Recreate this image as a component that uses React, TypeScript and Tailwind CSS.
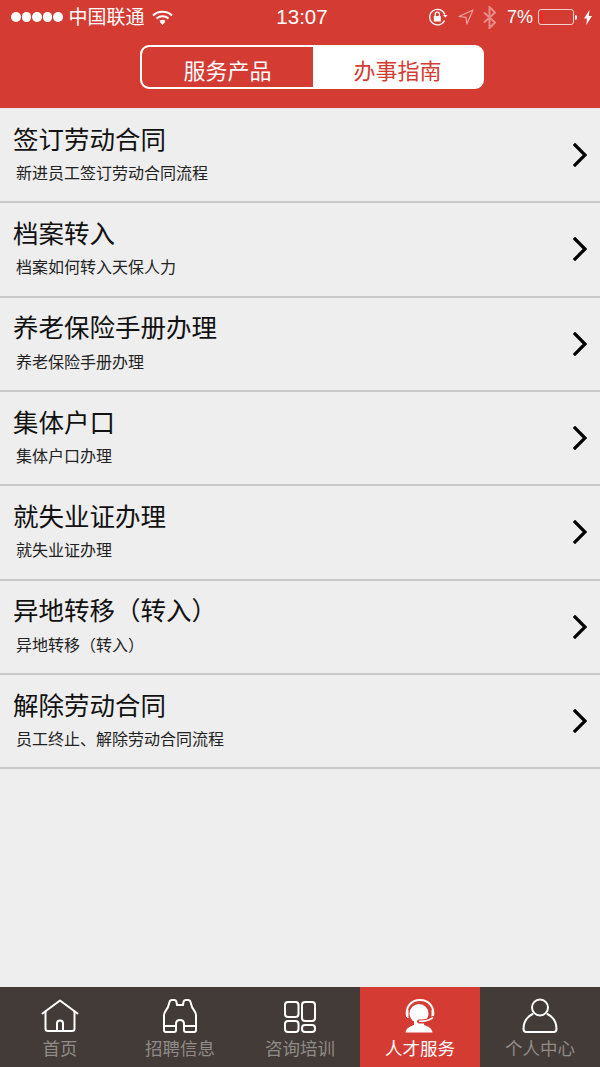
const FONT = "font-['Liberation_Sans','Noto_Sans_CJK_SC',sans-serif]";

const guides = [
  { title: "签订劳动合同", desc: "新进员工签订劳动合同流程" },
  { title: "档案转入", desc: "档案如何转入天保人力" },
  { title: "养老保险手册办理", desc: "养老保险手册办理" },
  { title: "集体户口", desc: "集体户口办理" },
  { title: "就失业证办理", desc: "就失业证办理" },
  { title: "异地转移（转入）", desc: "异地转移（转入）" },
  { title: "解除劳动合同", desc: "员工终止、解除劳动合同流程" },
];

function HomeIcon() {
  return (
    <svg width="38" height="34" viewBox="0 0 38 34" fill="none" stroke="#fff" strokeWidth="2" strokeLinejoin="round" strokeLinecap="round">
      <path d="M1.500 14.500 19 1.500 36.500 14.500" />
      <path d="M4.500 12.500v17a2.500 2.500 0 0 0 2.500 2.500h24a2.500 2.500 0 0 0 2.500-2.500v-17" />
      <path d="M16 32v-7.500a3 3 0 0 1 6 0V32" />
    </svg>
  );
}

function BinocularsIcon() {
  return (
    <svg width="34" height="34" viewBox="0 0 34 34" fill="none" stroke="#fff" strokeWidth="2" strokeLinejoin="round" strokeLinecap="round">
      <path d="M1 31V16c0-3 3-6 4-8l1.500-5Q7 1 9 1h2q2 0 2.500 2l.5 3h6l.5-3q.5-2 2.500-2h2q2 0 2.500 2L29 8c1 2 4 5 4 8v15q0 2-2 2h-8q-2 0-2-2v-6q0-4-4-4t-4 4v6q0 2-2 2H3q-2 0-2-2z" />
      <path d="M1 27h12M21 27h12" />
    </svg>
  );
}

function GridIcon() {
  return (
    <svg width="32" height="32" viewBox="0 0 32 32" fill="none" stroke="#fff" strokeWidth="2">
      <rect x="1" y="1" width="13.500" height="15" rx="3" />
      <rect x="18" y="1" width="13" height="19" rx="3" />
      <rect x="1" y="20" width="13.500" height="11" rx="3" />
      <rect x="18" y="24" width="13" height="7" rx="3" />
    </svg>
  );
}

function AgentIcon() {
  return (
    <svg width="32" height="34" viewBox="0 0 32 34" fill="none">
      <path d="M3 17C1.500 8 7 1 16 1s14.500 7 13 16" stroke="#fff" strokeWidth="2" strokeLinecap="round" />
      <path d="M2 11h2.500v8H3zM27.500 11H30l-1 8h-1.500z" fill="#fff" />
      <circle cx="15" cy="14.500" r="9.500" fill="#fff" />
      <path d="M10 21h10v6H10z" fill="#fff" />
      <path d="M1.500 33.500C2 29 6 27.500 10 26h10c4 1.500 8 3 8.500 7.500z" fill="#fff" />
      <path d="M15 22.500c5 .3 10-.8 14-3.500" stroke="#d43c33" strokeWidth="4" strokeLinecap="round" />
      <path d="M15.500 22.300c5 .2 9-.8 13-3.300" stroke="#fff" strokeWidth="1.600" strokeLinecap="round" />
    </svg>
  );
}

function PersonIcon() {
  return (
    <svg width="36" height="35" viewBox="0 0 36 35" fill="none" stroke="#fff" strokeWidth="2" strokeLinecap="round">
      <circle cx="18" cy="9.500" r="8" />
      <path d="M10.500 16C5 19 1.500 24 1.500 31c0 2 1 3 3 3h27c2 0 3-1 3-3 0-7-3.500-12-9-15" />
    </svg>
  );
}

const tabs = [
  { label: "首页", icon: <HomeIcon /> },
  { label: "招聘信息", icon: <BinocularsIcon /> },
  { label: "咨询培训", icon: <GridIcon /> },
  { label: "人才服务", icon: <AgentIcon />, active: true },
  { label: "个人中心", icon: <PersonIcon /> },
];

function StatusBar() {
  return (
    <div className="grid h-[34px] grid-cols-3 items-center text-white">
      <div className="flex items-center pl-[11px]">
        <div className="flex gap-[1px]">
          {[0, 1, 2, 3, 4].map((i) => (
            <span key={i} className="h-[9.500px] w-[9.500px] rounded-full bg-white" />
          ))}
        </div>
        <span className="ml-[6px] text-[19px] leading-none">中国联通</span>
        <svg className="ml-[7px]" width="21" height="15" viewBox="0 0 21 15" fill="none" stroke="#fff" strokeWidth="2">
          <path d="M1 5.500c5-5 14-5 19 0" />
          <path d="M4.500 8.500c3.500-3 8.500-3 12 0" />
          <path d="M8 11.500c1.500-1 3.500-1 5 0" />
          <path d="M10.500 15l-2.500-3c1.500-1 3.500-1 5 0z" fill="#fff" stroke="none" />
        </svg>
      </div>
      <div className="pl-[4px] text-center text-[20.500px] leading-none">13:07</div>
      <div className="flex items-center justify-end pr-[8px]">
        <svg width="19" height="18" viewBox="0 0 19 18" fill="none" stroke="#fff" strokeWidth="1.300">
          <path d="M15.500 12.500a7.800 7.800 0 1 1 .3-6" />
          <path d="M14 7h4.500l-2.200 2.500z" fill="#fff" stroke="none" />
          <rect x="4.800" y="8" width="7" height="5.500" fill="#fff" stroke="none" />
          <path d="M6.200 8V6.300a2.100 2.100 0 0 1 4.200 0V8" />
        </svg>
        <svg className="ml-[10px]" width="16" height="16" viewBox="0 0 16 16" fill="none" stroke="#eda5a1" strokeWidth="1.200" strokeLinejoin="round">
          <path d="M15 1 1 7.500l7 .8.800 6.700z" />
        </svg>
        <svg className="ml-[9px]" width="13" height="23" viewBox="0 0 13 23" fill="none" stroke="#e88a85" strokeWidth="2">
          <path d="M1 6.500l11 10L6.500 22V1L12 6.500 1 16.500" />
        </svg>
        <span className="ml-[11px] text-[18px] leading-none">7%</span>
        <div className="ml-[5px] flex items-center">
          <div className="h-[16px] w-[36px] rounded-[3px] border border-[#f4cfcc] p-[1px]">
            <div className="h-full w-[3px] bg-[#f02a20]" />
          </div>
          <span className="ml-[1px] h-[5px] w-[2px] rounded-r-full bg-white" />
        </div>
        <svg className="ml-[7px]" width="8" height="15" viewBox="0 0 8 15" fill="#fff">
          <path d="M5.500 0 0 8.500h3L2.300 15 8 6H4.800z" />
        </svg>
      </div>
    </div>
  );
}

function Row({ title, desc }: { title: string; desc: string }) {
  return (
    <div className="flex h-[94.330px] items-center justify-between border-b-2 border-[#c8c8c8] pr-[13px]">
      <div className="flex flex-col pb-[3.500px]">
        <span className="pl-[13px] text-[25.500px] leading-[36px] text-[#111]">{title}</span>
        <span className="mt-[5.500px] pl-[16px] text-[16px] leading-[22px] text-[#222]">{desc}</span>
      </div>
      <svg width="14" height="24" viewBox="0 0 14 24" fill="none" stroke="#000" strokeWidth="3.200" strokeLinecap="square">
        <path d="M2 2l10 10L2 22" />
      </svg>
    </div>
  );
}

export default function App() {
  return (
    <div className={`flex h-[1067px] w-[600px] flex-col overflow-hidden bg-[#eeeeee] ${FONT}`}>
      <header className="h-[109px] border-b border-[#e9e9e9] bg-[#d43c33]">
        <StatusBar />
        <div className="mt-[11px] ml-[140px] flex h-[44px] w-[344px] overflow-hidden rounded-[9px] border-2 border-white bg-white">
          <div className="flex w-[171px] items-end justify-center rounded-l-[7px] bg-[#d43c33] text-[22px] leading-[30px] text-white">
            服务产品
          </div>
          <div className="flex flex-1 items-end justify-center text-[22px] leading-[30px] text-[#d43c33]">
            办事指南
          </div>
        </div>
      </header>
      <main className="flex-1">
        {guides.map((g) => (
          <Row key={g.title} title={g.title} desc={g.desc} />
        ))}
      </main>
      <nav className="grid h-[80px] grid-cols-5 bg-[#433b37]">
        {tabs.map((t) => (
          <div key={t.label} className={`flex flex-col items-center ${t.active ? "bg-[#d43c33]" : ""}`}>
            <div className="flex h-[46px] items-end justify-center">{t.icon}</div>
            <span className={`mt-[4px] text-[17.500px] leading-[24px] ${t.active ? "text-white" : "text-[#8f8b88]"}`}>
              {t.label}
            </span>
          </div>
        ))}
      </nav>
    </div>
  );
}
